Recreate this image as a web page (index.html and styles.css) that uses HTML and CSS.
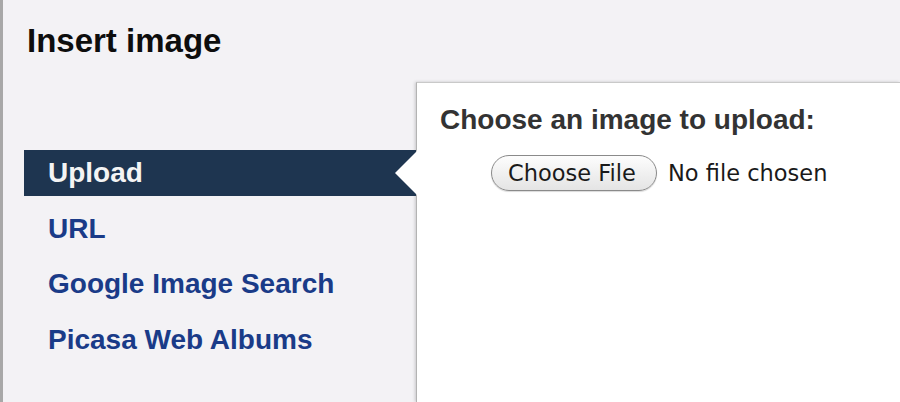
FILE: index.html
```html
<!DOCTYPE html>
<html>
<head>
<meta charset="utf-8">
<link rel="stylesheet" href="styles.css">
</head>
<body>
<div class="dialog">
  <div class="header"><h1 class="title">Insert image</h1></div>
  <ul class="nav">
    <li class="nav-item selected">Upload</li>
    <li class="nav-item">URL</li>
    <li class="nav-item">Google Image Search</li>
    <li class="nav-item">Picasa Web Albums</li>
  </ul>
  <div class="panel">
    <div class="panel-heading">Choose an image to upload:</div>
    <div class="file-row">
      <button class="file-btn" type="button">Choose File</button>
      <span class="file-status">No file chosen</span>
    </div>
  </div>
</div>
</body>
</html>
```
FILE: styles.css
```css
html, body {
  margin: 0;
  padding: 0;
  background: #f3f2f5;
}
.dialog {
  width: 900px;
  height: 402px;
  box-sizing: border-box;
  border-left: 3px solid #a8a8a8;
  display: grid;
  grid-template-columns: 413px 1fr;
  grid-template-rows: 82px 1fr;
  font-family: "Liberation Sans", Arial, sans-serif;
  overflow: hidden;
}
.header {
  grid-column: 1 / -1;
  padding: 24px 0 0 24px;
}
.title {
  margin: 0;
  font-size: 33px;
  line-height: 33px;
  font-weight: bold;
  color: #0d0d0d;
}
.nav {
  list-style: none;
  margin: 0;
  padding: 68px 0 0 21px;
  display: flex;
  flex-direction: column;
  gap: 9.5px;
}
.nav-item {
  position: relative;
  height: 46px;
  line-height: 46px;
  padding-left: 24px;
  font-size: 28px;
  font-weight: bold;
  color: #1a3b88;
}
.nav-item.selected {
  background: #1e3550;
  color: #f4f4f4;
}
.nav-item.selected::after {
  content: "";
  position: absolute;
  right: -2px;
  top: 0;
  width: 0;
  height: 0;
  border-top: 23px solid transparent;
  border-bottom: 23px solid transparent;
  border-right: 23px solid #fff;
  z-index: 2;
}
.panel {
  background: #fff;
  border-top: 1px solid #c9c9c9;
  border-left: 1px solid #b3b3b3;
  box-shadow: -1px 0 3px rgba(0, 0, 0, 0.18);
  padding: 23px 0 0 23px;
}
.panel-heading {
  font-size: 28px;
  line-height: 28px;
  font-weight: bold;
  color: #333;
}
.file-row {
  display: flex;
  align-items: center;
  margin: 21px 0 0 51px;
  font-family: "DejaVu Sans", sans-serif;
  font-size: 22.5px;
  color: #1a1a1a;
}
.file-btn {
  height: 36px;
  width: 166px;
  box-sizing: border-box;
  padding: 0 0 0 16px;
  text-align: left;
  border: 1px solid #8a8a8a;
  border-radius: 18px;
  background: linear-gradient(#fdfdfd, #e4e4e4);
  font-family: "DejaVu Sans", sans-serif;
  font-size: 22.5px;
  color: #1a1a1a;
  box-shadow: 0 1px 1px rgba(0,0,0,0.15);
}
.file-status {
  margin-left: 11px;
}
```
